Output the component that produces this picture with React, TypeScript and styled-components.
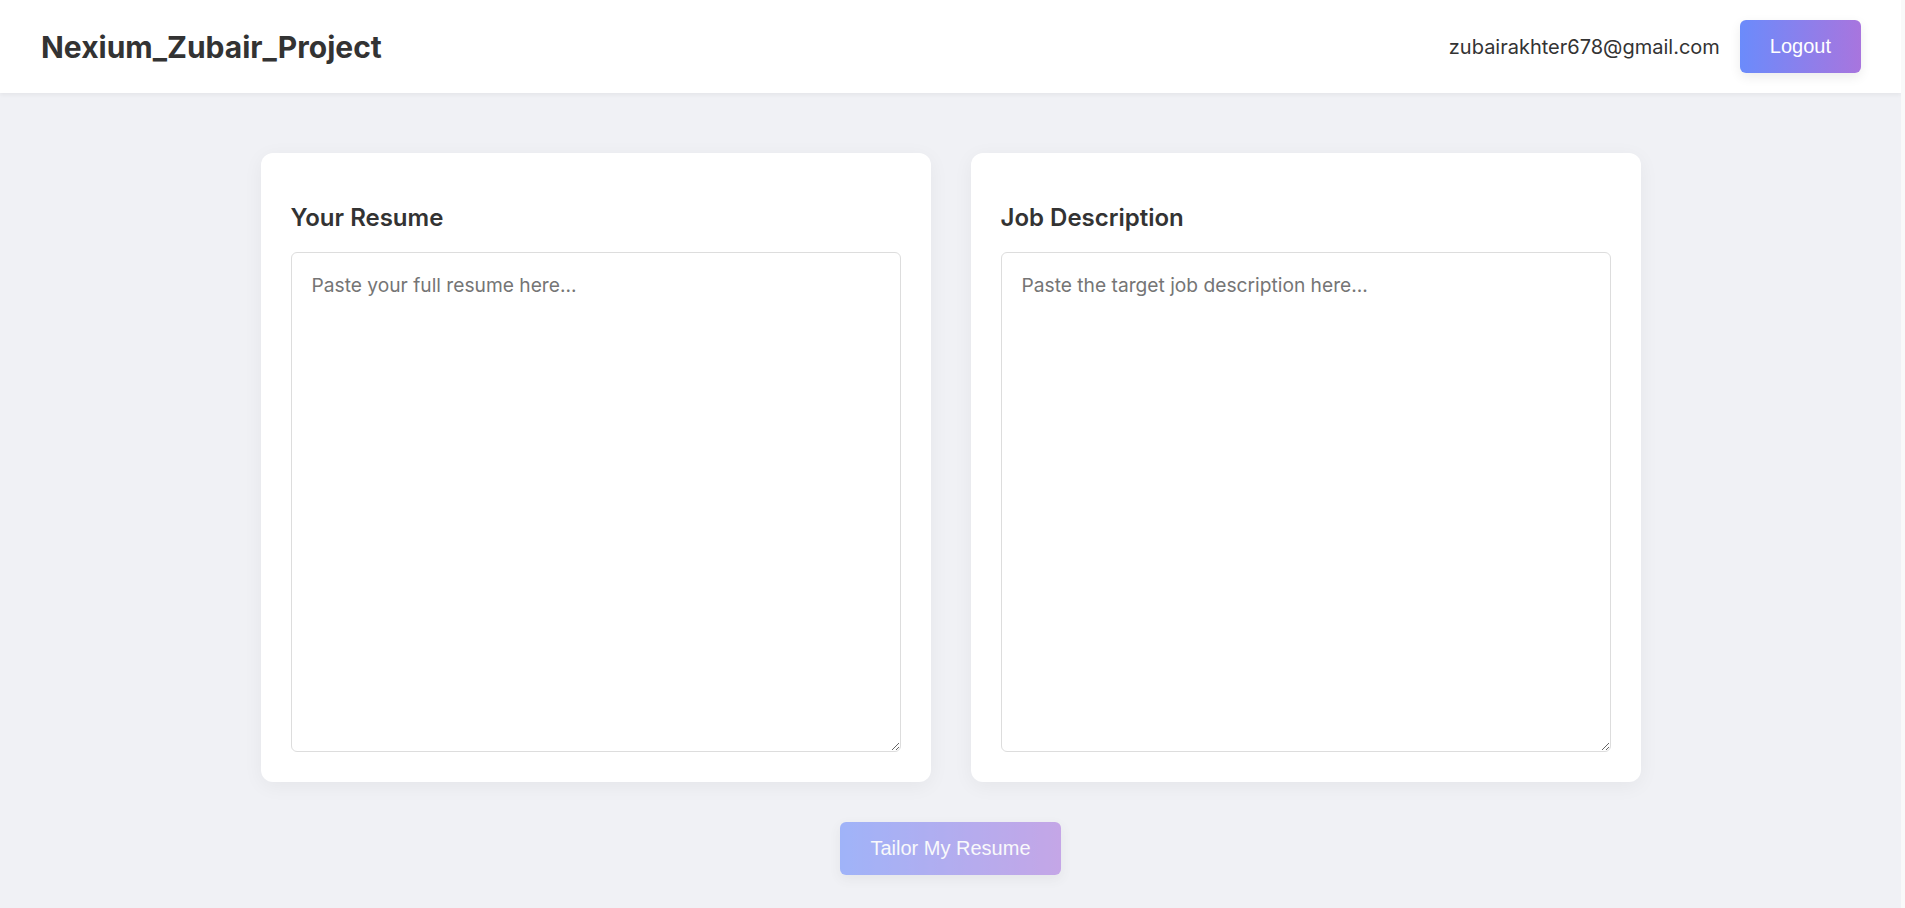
import React from "react";
import styled, { createGlobalStyle } from "styled-components";

const GlobalStyle = createGlobalStyle`
  * { box-sizing: border-box; }
  html {
    background: #f9f9f9;
  }
  body {
    margin: 0 4px 0 0;
    min-height: 100vh;
    font-family: Inter, "Noto Sans", sans-serif;
    background: #f0f1f5;
    color: #333;
  }
`;

const Header = styled.header`
  display: flex;
  align-items: center;
  justify-content: space-between;
  padding: 20px 40px 20px 41px;
  background: #ffffff;
  box-shadow: 0 2px 4px rgba(0, 0, 0, 0.05);
`;

const Brand = styled.h1`
  margin: 0;
  font-size: 30px;
  font-weight: 700;
  color: #333;
`;

const UserArea = styled.div`
  display: flex;
  align-items: center;
  gap: 20px;
`;

const Email = styled.span`
  font-size: 20px;
  color: #333;
`;

const GradientButton = styled.button<{ $disabled?: boolean }>`
  font-family: "Liberation Sans", Arial, sans-serif;
  font-size: 20px;
  line-height: 23px;
  padding: 15px 30px;
  border: none;
  border-radius: 6px;
  color: #ffffff;
  background: linear-gradient(90deg, #6b8bfb 0%, #a875de 100%);
  box-shadow: 0 4px 12px rgba(0, 0, 0, 0.08);
  cursor: pointer;
  opacity: ${(p) => (p.$disabled ? 0.6 : 1)};
`;

const Main = styled.main`
  padding: 60px 20px 30px;
  display: flex;
  flex-direction: column;
  align-items: center;
`;

const Grid = styled.div`
  width: 100%;
  max-width: 1380px;
  display: grid;
  grid-template-columns: 1fr 1fr;
  gap: 40px;
`;

const Card = styled.section`
  background: #ffffff;
  border-radius: 12px;
  padding: 30px;
  box-shadow: 0 4px 20px rgba(0, 0, 0, 0.05);
`;

const CardTitle = styled.h2`
  margin: 20px 0;
  font-size: 24px;
  font-weight: 600;
  color: #333;
`;

const TextArea = styled.textarea`
  display: block;
  width: 100%;
  height: 500px;
  padding: 20px;
  border: 1px solid #dddddd;
  border-radius: 6px;
  font-family: Inter, "Noto Sans", sans-serif;
  font-size: 19.2px;
  color: #333;
  background: #fff;
  outline: none;
  &::placeholder {
    color: #757575;
  }
`;

const Actions = styled.div`
  margin-top: 40px;
`;

export default function App() {
  return (
    <>
      <GlobalStyle />
      <Header>
        <Brand>Nexium_Zubair_Project</Brand>
        <UserArea>
          <Email>zubairakhter678@gmail.com</Email>
          <GradientButton>Logout</GradientButton>
        </UserArea>
      </Header>
      <Main>
        <Grid>
          <Card>
            <CardTitle>Your Resume</CardTitle>
            <TextArea placeholder="Paste your full resume here..." />
          </Card>
          <Card>
            <CardTitle>Job Description</CardTitle>
            <TextArea placeholder="Paste the target job description here..." />
          </Card>
        </Grid>
        <Actions>
          <GradientButton $disabled>Tailor My Resume</GradientButton>
        </Actions>
      </Main>
    </>
  );
}
